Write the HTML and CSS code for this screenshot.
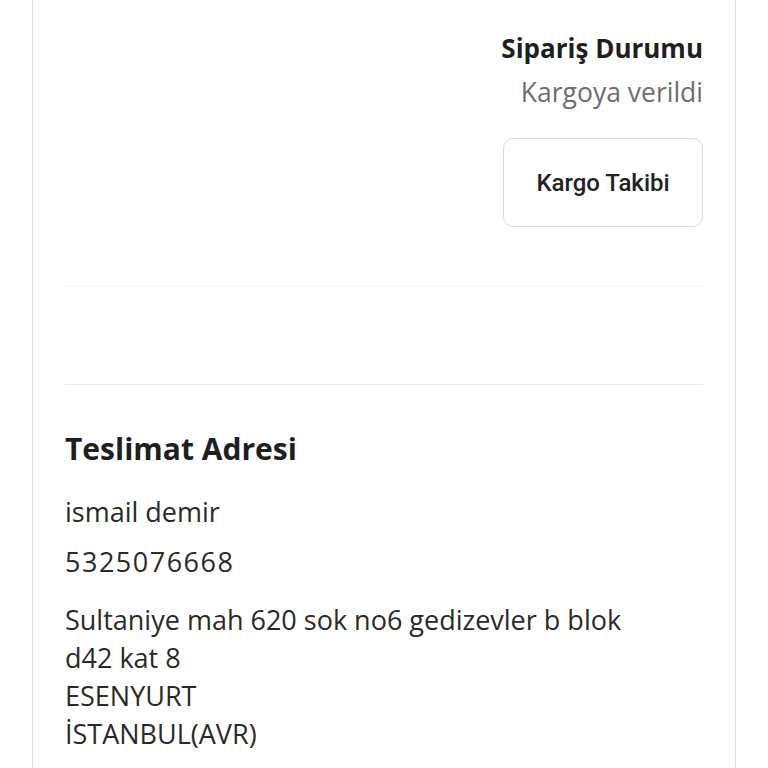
FILE: index.html
```html
<!DOCTYPE html>
<html lang="tr">
  <head>
    <meta charset="UTF-8" />
    <meta name="viewport" content="width=device-width, initial-scale=1.0" />
    <title>Sipariş Detayı</title>
    <link rel="stylesheet" href="styles.css">
  </head>
  <body>
    <div class="order-card">
      <div class="status-block">
        <div class="status-title">Sipariş Durumu</div>
        <div class="status-value">Kargoya verildi</div>
        <button class="track-btn">Kargo Takibi</button>
      </div>

      <hr class="divider divider-light" />
      <hr class="divider" />

      <div class="address-block">
        <h2>Teslimat Adresi</h2>
        <p class="addr-name">ismail demir</p>
        <p class="addr-phone">5325076668</p>
        <p class="addr-text">
          Sultaniye mah 620 sok no6 gedizevler b blok<br />
          d42 kat 8<br />
          ESENYURT<br />
          İSTANBUL(AVR)
        </p>
      </div>
    </div>
  </body>
</html>
```

FILE: styles.css
```css
body {
  margin: 0;
  padding: 0 32px;
  font-family: "Open Sans", Roboto, sans-serif;
  background: #ffffff;
  color: #202124;
  overflow: hidden;
}
.order-card {
  border-left: 1px solid #dedede;
  border-right: 1px solid #dedede;
  padding: 26px 32px 40px;
  min-height: 768px;
  box-sizing: border-box;
}
.status-block {
  display: flex;
  flex-direction: column;
  align-items: flex-end;
}
.status-title {
  font-size: 26px;
  line-height: 44px;
  font-weight: 700;
  color: #1f1f1f;
}
.status-value {
  font-size: 26.5px;
  line-height: 44px;
  color: #6e6e6e;
}
.track-btn {
  margin-top: 24px;
  width: 200px;
  height: 89px;
  background: #fff;
  border: 1px solid #dcdcdc;
  border-radius: 10px;
  font-family: Roboto, sans-serif;
  font-size: 24px;
  font-weight: 500;
  color: #222;
}
.divider {
  border: none;
  height: 1px;
  margin: 0;
  background: #e9e9ee;
}
.divider-light {
  background: #f4f4f4;
  margin: 59px 0 97px;
}
.address-block {
  padding-top: 44px;
}
.address-block h2 {
  margin: 0 0 24px;
  font-size: 30px;
  line-height: 40px;
  font-weight: 700;
  color: #1f1f1f;
}
.address-block p {
  margin: 0;
  font-size: 27px;
  line-height: 38px;
  color: #2a2a2a;
}
.addr-name {
  margin-bottom: 12px !important;
}
.addr-phone {
  margin-bottom: 20px !important;
  letter-spacing: 1.5px;
}
```
